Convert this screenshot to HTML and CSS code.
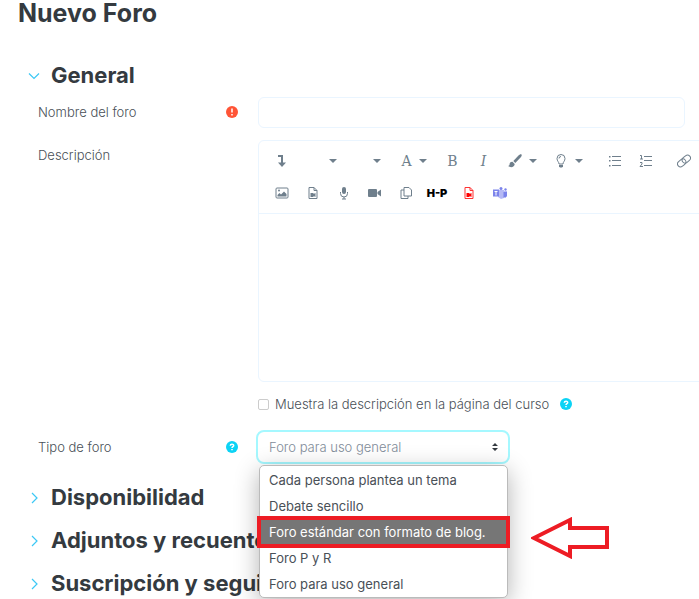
FILE: index.html
```html
<!DOCTYPE html>
<html lang="es">
<head>
  <meta charset="UTF-8" />
  <title>Nuevo Foro</title>
  <meta name="viewport" content="width=device-width, initial-scale=1.0" />
  <link rel="stylesheet" href="styles.css">
</head>
<body>

<h1>Nuevo Foro</h1>

<form class="mform">
  <h2><button type="button" class="toggle" aria-expanded="true">
    <svg class="chevron" viewBox="0 0 12 12"><path d="M1 3.500l5 5 5-5"/></svg>General
  </button></h2>

  <div class="row">
    <div class="row-label">
      <label for="name">Nombre del foro</label>
      <svg class="badge required" viewBox="0 0 12 12"><circle cx="6" cy="6" r="6"/><path d="M6 2.500v4M6 8v1.500"/></svg>
    </div>
    <input type="text" id="name" class="text-input" />
  </div>

  <div class="row row-editor">
    <div class="row-label"><label for="intro">Descripción</label></div>
    <div class="editor">
      <div class="toolbar">
        <div class="tools">
          <button type="button" class="tool" aria-label="Más botones"><svg viewBox="0 0 14 14"><path class="line2" d="M3 2h4v8"/><path d="M3 8.500h8L7 13z"/></svg></button>
          <button type="button" class="tool empty" aria-label="Estilos"><svg class="caret" viewBox="0 0 8 4"><path d="M0 0h8L4 4z"/></svg></button>
          <button type="button" class="tool empty size" aria-label="Tamaño"><svg class="caret" viewBox="0 0 8 4"><path d="M0 0h8L4 4z"/></svg></button>
          <button type="button" class="tool letter wide font" aria-label="Fuente">A<svg class="caret" viewBox="0 0 8 4"><path d="M0 0h8L4 4z"/></svg></button>
          <button type="button" class="tool letter" aria-label="Negrita">B</button>
          <button type="button" class="tool letter italic" aria-label="Cursiva">I</button>
          <button type="button" class="tool wide" aria-label="Color"><svg viewBox="0 0 14 14"><path d="M13.500.5c-.8-.8-2 0-3 1L5.300 7l2 2 5-5.300c1-1.100 1.900-2.400 1.200-3.200zM4.500 7.800C2.500 7.600 1.700 9 1.600 10.200c-.1 1-.7 1.600-1.500 1.900C2.500 14 6.800 13.300 6.700 9.900z"/></svg><svg class="caret" viewBox="0 0 8 4"><path d="M0 0h8L4 4z"/></svg></button>
          <button type="button" class="tool wide" aria-label="Fondo"><svg viewBox="0 0 14 14"><path class="line" d="M5 10C5 8 3 7 3 4.500a4 4 0 0 1 8 0C11 7 9 8 9 10zM5 4.500a2 2 0 0 1 2-2"/><path d="M5 11h4v1.500L8 13.500H6l-1-1z"/></svg><svg class="caret" viewBox="0 0 8 4"><path d="M0 0h8L4 4z"/></svg></button>
          <button type="button" class="tool bullets" aria-label="Lista"><svg viewBox="0 0 14 14"><path class="line" d="M4 2.500h9M4 6.500h9M4 11.500h9"/><path d="M1 2h1.500v1.500H1zM1 6h1.500v1.500H1zM1 11h1.500v1.500H1z"/></svg></button>
          <button type="button" class="tool" aria-label="Lista numerada"><svg viewBox="0 0 14 14"><path class="line" d="M5 2.500h8M5 6.500h8M5 11.500h8M1 1.500h1.500V5M1 5h3M1 8.500h2V10L1 12.500h3"/></svg></button>
          <button type="button" class="tool chain" aria-label="Enlace"><svg viewBox="0 0 14 14"><g class="line" transform="rotate(-40 7 7)"><rect x="-.5" y="4" width="9" height="6" rx="3"/><rect x="5.500" y="4" width="9" height="6" rx="3"/></g></svg></button>
        </div>
        <div class="tools">
          <button type="button" class="tool" aria-label="Imagen"><svg viewBox="0 0 14 14"><rect class="line" x="1" y="2" width="12" height="10" rx="1"/><path d="M2.500 10.500V9l2-2 1.500 1.500L9 5.500l2.500 2.500v2.500z"/><circle cx="4" cy="4.500" r="1"/></svg></button>
          <button type="button" class="tool" aria-label="Multimedia"><svg viewBox="0 0 14 14"><path class="line" d="M3 1.500h5L11 4.500v8H3zM8 1.500v3h3"/><path d="M4.500 7h3v1l2-1v4l-2-1v1h-3z"/></svg></button>
          <button type="button" class="tool" aria-label="Grabar audio"><svg viewBox="0 0 14 14"><rect x="5" y="1" width="4" height="7" rx="2"/><path class="line" d="M3.500 6v1.500a3.500 3.500 0 0 0 7 0V6M7 11v2M5 13h4"/></svg></button>
          <button type="button" class="tool" aria-label="Grabar vídeo"><svg viewBox="0 0 14 14"><rect x="0" y="3" width="9" height="8" rx="1"/><path d="M9.500 6L13 3.500v7L9.500 8z"/></svg></button>
          <button type="button" class="tool" aria-label="Archivos"><svg viewBox="0 0 14 14"><path class="line" d="M5 1.500h5L12.500 4v6H5zM5 4H2v8.500h7V10"/></svg></button>
          <button type="button" class="tool h5p" aria-label="H5P">H-P</button>
          <button type="button" class="tool pdf" aria-label="PDF"><svg viewBox="0 0 14 14"><path class="line" d="M3 1.500h5L11 4.500v8H3zM8 1.500v3h3"/><path d="M4.500 7h3v1l2-1v4l-2-1v1h-3z"/></svg></button>
          <button type="button" class="tool teams" aria-label="Teams"><svg viewBox="0 0 14 14"><path class="pale" d="M6 4h5v8L8 13 5 11zM11 5h3v5l-2 2z"/><circle cx="8" cy="2.500" r="1.500"/><circle cx="12.500" cy="3.500" r="1.200"/><path d="M10.500 6H14v4l-1.500 1.500h-2zM0 3.500h6v7H0z"/><path class="tee" d="M1.500 5.500h3M3 5.500v4"/></svg></button>
        </div>
      </div>
      <textarea id="intro"></textarea>
    </div>
  </div>

  <div class="row row-check">
    <div class="check">
      <input type="checkbox" id="show" />
      <label for="show">Muestra la descripción en la página del curso</label>
      <svg class="badge help" viewBox="0 0 12 12"><circle cx="6" cy="6" r="6"/><path d="M4.300 4.700c0-2 3.400-2 3.400-.2C7.700 5.700 6 5.700 6 7M6 8v1.300"/></svg>
    </div>
  </div>

  <div class="row row-type">
    <div class="row-label">
      <label for="type">Tipo de foro</label>
      <svg class="badge help" viewBox="0 0 12 12"><circle cx="6" cy="6" r="6"/><path d="M4.300 4.700c0-2 3.400-2 3.400-.2C7.700 5.700 6 5.700 6 7M6 8v1.300"/></svg>
    </div>
    <div class="select-wrap">
      <select id="type">
        <option>Foro para uso general</option>
      </select>
      <svg class="arrows" viewBox="0 0 6 8"><path d="M0 3h6L3 0zM0 5h6L3 8z"/></svg>
      <ul class="menu">
        <li>Cada persona plantea un tema</li>
        <li>Debate sencillo</li>
        <li class="active">Foro estándar con formato de blog.</li>
        <li>Foro P y R</li>
        <li>Foro para uso general</li>
      </ul>
      <svg class="pointer" viewBox="0 0 80 42"><path d="M3 21L39 3v8h37v19H39v9z"/></svg>
    </div>
  </div>

  <div class="sections">
    <h2><button type="button" class="toggle" aria-expanded="false"><svg class="chevron" viewBox="0 0 12 12"><path d="M4 1l5 5-5 5"/></svg>Disponibilidad</button></h2>
    <h2><button type="button" class="toggle" aria-expanded="false"><svg class="chevron" viewBox="0 0 12 12"><path d="M4 1l5 5-5 5"/></svg>Adjuntos y recuento</button></h2>
    <h2><button type="button" class="toggle" aria-expanded="false"><svg class="chevron" viewBox="0 0 12 12"><path d="M4 1l5 5-5 5"/></svg>Suscripción y seguimiento</button></h2>
  </div>
</form>

</body>
</html>
```
FILE: styles.css
```css
* { box-sizing: border-box; }
body {
  margin: 0; padding: 0 14px 0 18px; background: #fff; color: #495057;
  font-family: Inter, "Liberation Sans", sans-serif; font-size: 13px; font-weight: 300;
  overflow-x: hidden;
}
button, input, select, textarea { font: inherit; color: inherit; }
h1, h2 { margin: 0; color: #343a40; font-weight: 700; }
h1 { font-size: 25px; line-height: 26px; }
h2 { font-size: 22px; line-height: 43px; }
.mform { padding-top: 28px; }
.toggle {
  display: flex; align-items: center; gap: 11px; height: 43px;
  margin: 0; padding: 0 0 0 10px; border: 0; background: none; white-space: nowrap; cursor: pointer;
}
.chevron { width: 12px; height: 12px; fill: none; stroke: #3cc8f5; stroke-width: 1.2; }

.row { display: grid; grid-template-columns: 220px 1fr; padding-left: 20px; }
.row-label { display: flex; justify-content: space-between; height: 30px; align-items: center; padding-right: 20px; }
.badge { width: 12px; height: 12px; flex: none; }
.badge path { fill: none; stroke: #fff; stroke-width: 1.5; }
.required { fill: #ff5436; }
.help { fill: #0cd3f5; }
.text-input { width: 100%; height: 31px; padding: 0 10px; border: 1px solid #eaf5ff; border-radius: 6px; background: #fff; }

.row-editor { margin-top: 12px; }
.editor { margin-right: -30px; border: 1px solid #eaf5ff; border-radius: 6px; }
.toolbar { padding: 4px 0 4px 7px; border-bottom: 1px solid #eaf5ff; }
.tools { display: flex; height: 32px; align-items: center; }
.tool {
  display: flex; align-items: center; justify-content: center; gap: 7px;
  width: 31px; height: 30px; padding: 0; border: 0; background: none; color: #6f7f8c; flex: none; cursor: pointer;
}
.tool svg { width: 14px; height: 14px; fill: #6f7f8c; }
.tool .caret { width: 8px; height: 4px; }
.tool .line, .tool .line2 { fill: none; stroke: #6f7f8c; }
.tool .line2 { stroke-width: 2; }
.letter { font-family: "DejaVu Serif", serif; font-size: 14px; }
.empty { width: 40px; justify-content: flex-end; }
.size { width: 44px; }
.wide { width: 46px; }
.font { margin-left: 10px; }
.bullets { margin-left: 8px; }
.chain { margin-left: 7px; }
.italic { font-style: italic; }
.h5p { width: 32px; color: #000; font-size: 11px; font-weight: 900; }
.pdf svg { fill: #f00; }
.tool.pdf .line { stroke: #f33; }
.teams svg { fill: #7b83eb; }
.teams .pale { fill: #b5b9f5; }
.teams .tee { fill: none; stroke: #fff; }
textarea { display: block; width: 100%; height: 167px; padding: 8px; border: 0; resize: none; background: none; outline: 0; }

.row-check { margin-top: 12px; }
.check { grid-column: 2; display: flex; align-items: center; height: 20px; }
.check input { appearance: none; width: 11px; height: 11px; margin: 0 6px 0 0; border: 1px solid #ccc; border-radius: 2px; }
.check .badge { margin-left: 11px; }
.row-type { margin-top: 16px; }
.row-type .row-label { height: 34px; }
.select-wrap { position: relative; width: 254px; margin-left: -2px; }
select {
  appearance: none; width: 100%; height: 34px; padding: 0 11px;
  border: 2px solid #a5f8ff; border-radius: 8px; background: #fff; color: #7f8c99;
}
.arrows { position: absolute; right: 12px; top: 13px; width: 6px; height: 8px; fill: #343a40; }
.menu {
  position: absolute; z-index: 1; top: 35px; left: 3px; width: 249px; margin: 0; padding: 1px 0 0; list-style: none;
  background: #fff; border: 1px solid #bbb; border-radius: 5px; box-shadow: 0 6px 24px rgba(0,0,0,.3);
  font-weight: 400;
}
.menu li { height: 26px; line-height: 26px; padding-left: 9px; white-space: nowrap; }
.menu .active { background: #767676; color: #fff; outline: 4px solid #ed1c24; outline-offset: -1px; }
.pointer { position: absolute; top: 87px; left: 275px; width: 80px; height: 42px; fill: #fff; stroke: #ed1c24; stroke-width: 4; }
.sections { padding-top: 12px; }
```
